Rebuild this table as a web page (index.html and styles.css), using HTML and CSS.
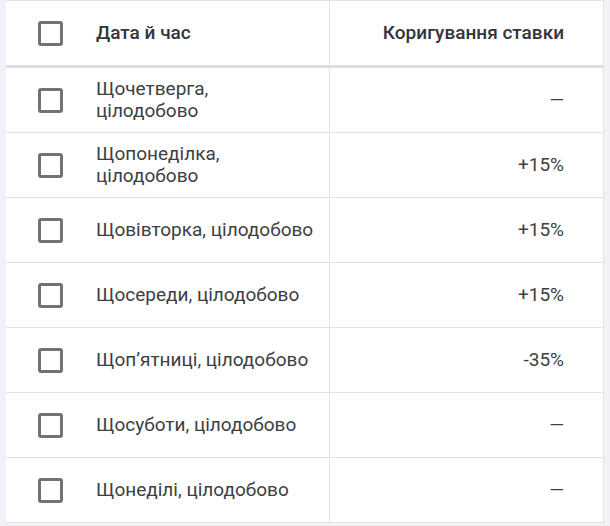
FILE: index.html
```html
<!DOCTYPE html>
<html lang="uk">
<head>
<meta charset="utf-8">
<link rel="stylesheet" href="styles.css">
</head>
<body>
<div class="page">
<table class="grid">
  <thead>
    <tr>
      <th class="c-check"><span class="box"></span></th>
      <th class="c-name">Дата й час</th>
      <th class="c-val">Коригування ставки</th>
    </tr>
  </thead>
  <tbody>
    <tr><td class="c-check"><span class="box"></span></td><td class="c-name">Щочетверга, цілодобово</td><td class="c-val">—</td></tr>
    <tr><td class="c-check"><span class="box"></span></td><td class="c-name">Щопонеділка, цілодобово</td><td class="c-val">+15%</td></tr>
    <tr><td class="c-check"><span class="box"></span></td><td class="c-name">Щовівторка, цілодобово</td><td class="c-val">+15%</td></tr>
    <tr><td class="c-check"><span class="box"></span></td><td class="c-name">Щосереди, цілодобово</td><td class="c-val">+15%</td></tr>
    <tr><td class="c-check"><span class="box"></span></td><td class="c-name">Щоп’ятниці, цілодобово</td><td class="c-val">-35%</td></tr>
    <tr><td class="c-check"><span class="box"></span></td><td class="c-name">Щосуботи, цілодобово</td><td class="c-val">—</td></tr>
    <tr><td class="c-check"><span class="box"></span></td><td class="c-name">Щонеділі, цілодобово</td><td class="c-val">—</td></tr>
  </tbody>
</table>
</div>
</body>
</html>
```
FILE: styles.css
```css
html, body {
  margin: 0;
  padding: 0;
  background: #f1f2f5;
}
.page {
  padding-left: 6px;
  width: 598px;
}
.grid {
  width: 598px;
  border-collapse: separate;
  border-spacing: 0;
  background: #fff;
  font-family: Roboto, "Noto Sans", sans-serif;
  font-size: 19px;
  color: #3c4043;
  table-layout: fixed;
}
.grid th, .grid td {
  height: 64px;
  padding: 0;
  box-sizing: border-box;
  vertical-align: middle;
  border-bottom: 1px solid #e2e3e7;
  line-height: 22px;
}
.grid thead th {
  border-top: 1px solid #e2e3e7;
  border-bottom: 3px solid #dcdde1;
  height: 68px;
  font-weight: 500;
  color: #333538;
  text-align: left;
}
.grid tbody td {
  height: 65px;
}
.c-check {
  width: 90px;
  padding-left: 32px !important;
}
.c-name {
  width: 234px;
  padding-right: 15px !important;
  border-right: 1px solid #e2e3e7;
}
.c-val {
  text-align: right !important;
  padding-right: 39px !important;
  border-right: 1px solid #e2e3e7;
}
.box {
  display: block;
  width: 25px;
  height: 25px;
  box-sizing: border-box;
  border: 3px solid #737373;
  border-radius: 3px;
}
```
